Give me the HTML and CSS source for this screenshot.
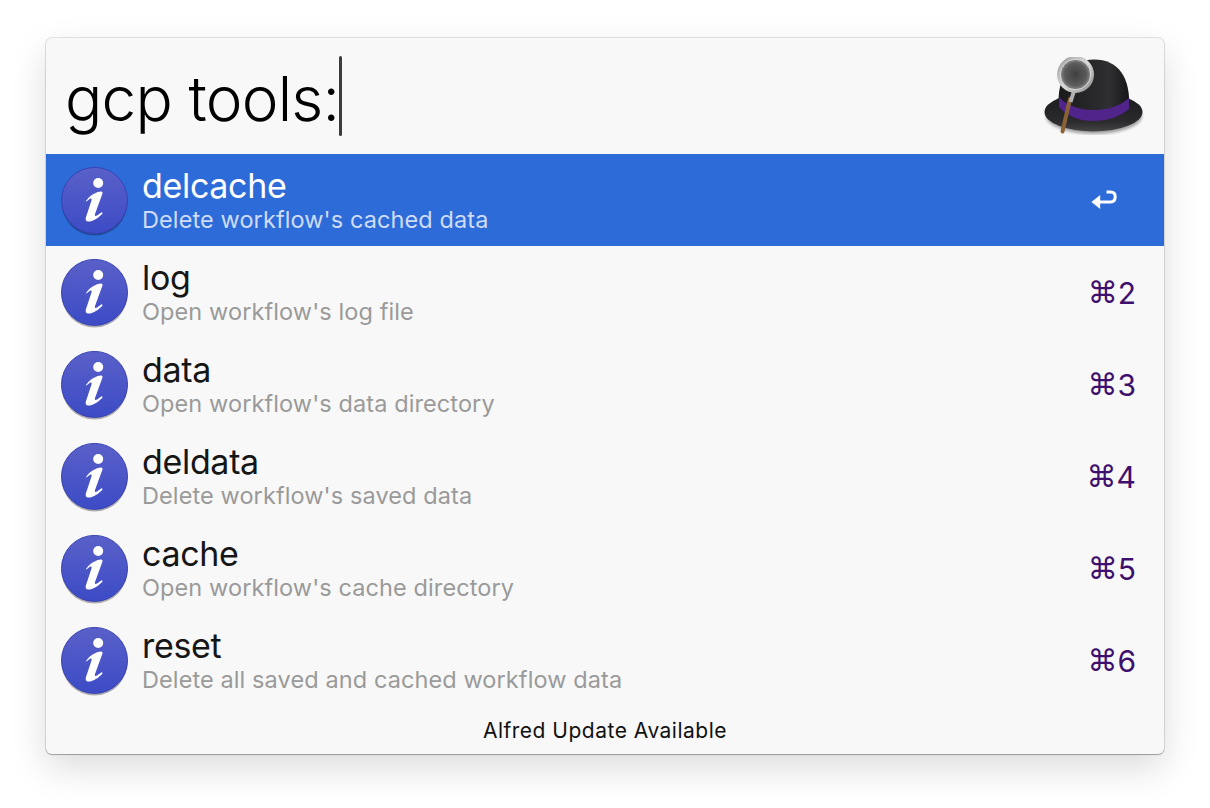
FILE: index.html
```html
<!DOCTYPE html>
<html lang="en">
<head>
<meta charset="utf-8">
<title>Alfred</title>
<link rel="stylesheet" href="styles.css">
</head>
<body>
<svg class="defs" width="0" height="0" aria-hidden="true">
  <defs>
    <linearGradient id="disc" x1="0" y1="0" x2="0" y2="1">
      <stop offset="0" stop-color="#5a60c8"/>
      <stop offset="1" stop-color="#3c4bc6"/>
    </linearGradient>
    <symbol id="info" viewBox="0 0 68 70">
      <ellipse cx="33.5" cy="36.4" rx="33" ry="33.2" fill="#000" opacity=".3"/>
      <circle cx="33.5" cy="34.4" r="33" fill="url(#disc)" stroke="#3a42b4" stroke-width="1"/>
      <circle cx="37.2" cy="17" r="5" fill="#fff"/>
      <path d="M25 35 C29 29 35 26 40 25.5 C41.5 25.4 41.8 26.5 41.3 28 L34 48 C33.4 50 34.5 50.5 36 49.5 L41 46 L41.5 47.5 C38 51.5 33 55 28.5 55.5 C25 56 24 54 25 51 L30.5 34.5 C31 32.5 30 32 28.5 33 L25.5 35.5 Z" fill="#fff"/>
    </symbol>
    <linearGradient id="crown" x1="0" y1="0" x2="1" y2="0">
      <stop offset="0" stop-color="#1a191b"/>
      <stop offset=".72" stop-color="#2f2e30"/>
      <stop offset="1" stop-color="#161517"/>
    </linearGradient>
    <linearGradient id="brim" x1="0" y1="0" x2="0" y2="1">
      <stop offset="0" stop-color="#19181a"/>
      <stop offset=".75" stop-color="#2b2a2c"/>
      <stop offset="1" stop-color="#454446"/>
    </linearGradient>
    <radialGradient id="lens" cx=".5" cy=".5" r=".55">
      <stop offset="0" stop-color="#3f3f40"/>
      <stop offset=".6" stop-color="#5c5c5d"/>
      <stop offset="1" stop-color="#b5b5b5"/>
    </radialGradient>
    <linearGradient id="ring" x1="0" y1="0" x2="1" y2="1">
      <stop offset="0" stop-color="#9b9b9b"/>
      <stop offset=".5" stop-color="#dcdcdc"/>
      <stop offset="1" stop-color="#8a8a8a"/>
    </linearGradient>
    <filter id="soft" x="-10%" y="-30%" width="120%" height="160%"><feGaussianBlur stdDeviation="1.6"/></filter>
  </defs>
</svg>
<main class="window">
  <header class="search">
    <div class="query"><span>gcp tools:</span><i class="caret"></i></div>
    <svg class="logo" viewBox="0 0 100 78" aria-hidden="true">
      <ellipse cx="50" cy="59" rx="48" ry="18" fill="#000" opacity=".35" filter="url(#soft)"/>
      <ellipse cx="49.5" cy="55" rx="49" ry="19.5" fill="url(#brim)"/>
      <path d="M15 50 C12 22 26 2.5 50 2.5 C74 2.5 87 20 85 52 C75 62 62 64 49 64 C36 64 24 60 15 50 Z" fill="url(#crown)"/>
      <path d="M15 40 C24 50 38 53 50 53 C64 53 76 49 85 41 L85 52 C76 60 63 64 49 64 C36 64 24 60 15 50 Z" fill="#50248a"/>
      <path d="M26 42 L18.5 74.5" stroke="#8a6236" stroke-width="4" stroke-linecap="round"/>
      <path d="M30 34 L26.5 45" stroke="#b0b0b0" stroke-width="4"/>
      <circle cx="31.5" cy="17.5" r="17" fill="url(#lens)" stroke="url(#ring)" stroke-width="3"/>
      <circle cx="31.5" cy="17.5" r="15.2" fill="none" stroke="#fff" stroke-opacity=".7" stroke-width="1"/>
    </svg>
  </header>
  <ul class="results">
    <li class="row selected">
      <svg class="icon" aria-hidden="true"><use href="#info"/></svg>
      <div class="text"><div class="title">delcache</div><div class="sub">Delete workflow's cached data</div></div>
      <svg class="enter" viewBox="0 0 26 22" aria-hidden="true"><path d="M15.5 2 H19.5 C22.5 2 24.2 4 24.2 6.8 C24.2 10 22.5 12 19.5 12 H5" fill="none" stroke="#fff" stroke-width="3"/><path d="M0.4 12 L9.2 5 V19 Z" fill="#fff"/></svg>
    </li>
    <li class="row">
      <svg class="icon" aria-hidden="true"><use href="#info"/></svg>
      <div class="text"><div class="title">log</div><div class="sub">Open workflow's log file</div></div>
      <div class="key"><span class="cmd">⌘</span>2</div>
    </li>
    <li class="row">
      <svg class="icon" aria-hidden="true"><use href="#info"/></svg>
      <div class="text"><div class="title">data</div><div class="sub">Open workflow's data directory</div></div>
      <div class="key"><span class="cmd">⌘</span>3</div>
    </li>
    <li class="row">
      <svg class="icon" aria-hidden="true"><use href="#info"/></svg>
      <div class="text"><div class="title">deldata</div><div class="sub">Delete workflow's saved data</div></div>
      <div class="key"><span class="cmd">⌘</span>4</div>
    </li>
    <li class="row">
      <svg class="icon" aria-hidden="true"><use href="#info"/></svg>
      <div class="text"><div class="title">cache</div><div class="sub">Open workflow's cache directory</div></div>
      <div class="key"><span class="cmd">⌘</span>5</div>
    </li>
    <li class="row">
      <svg class="icon" aria-hidden="true"><use href="#info"/></svg>
      <div class="text"><div class="title">reset</div><div class="sub">Delete all saved and cached workflow data</div></div>
      <div class="key"><span class="cmd">⌘</span>6</div>
    </li>
  </ul>
  <footer class="update">Alfred Update Available</footer>
</main>
</body>
</html>
```
FILE: styles.css
```css
* { box-sizing: border-box; }
html, body { margin: 0; height: 100%; }
body {
  background: #fff;
  padding: 38px 46px 0;
  font-family: Inter, "Liberation Sans", sans-serif;
  overflow: hidden;
}
.defs { display: block; height: 0; }
.window {
  width: 1118px;
  height: 716px;
  background: #f8f8f8;
  border-radius: 6px;
  box-shadow: 0 0 0 1px rgba(0,0,0,.1), 0 1px 1px rgba(0,0,0,.25), 0 14px 36px rgba(0,0,0,.14);
  display: flex;
  flex-direction: column;
}
.search {
  height: 116px;
  display: flex;
  align-items: center;
  justify-content: space-between;
  padding: 0 20px 0 19px;
}
.query {
  display: flex;
  align-items: center;
  font-size: 62px;
  font-weight: 300;
  letter-spacing: -.8px;
  line-height: 80px;
  color: #000;
}
.query span { padding-top: 6px; }
.caret {
  display: block;
  width: 3px;
  height: 80px;
  background: #3c3c3c;
  border-radius: 2px;
}
.logo { width: 100px; height: 78px; }
.results { list-style: none; margin: 0; padding: 0; }
.row {
  height: 92px;
  display: flex;
  align-items: center;
  padding: 2px 28px 0 15px;
}
.row.selected { background: #2d6bd9; color: #fff; }
.icon { width: 68px; height: 70px; flex: none; }
.text { flex: 1; margin-left: 13px; min-width: 0; }
.title {
  font-size: 34px;
  line-height: 37px;
  color: #161616;
  letter-spacing: -.33px;
}
.sub {
  font-size: 23.5px;
  line-height: 32px;
  color: #9a9a9a;
  letter-spacing: .1px;
}
.selected .title { color: #fff; }
.selected .sub { color: #cfdcf5; }
.key {
  font-size: 30px;
  color: #3f0f6e;
  display: flex;
  align-items: center;
  margin-top: -1px;
}
.cmd { font-family: "DejaVu Sans", sans-serif; font-size: 30px; }
.enter { width: 26px; height: 22px; margin-right: 19px; }
.update {
  flex: 1;
  display: flex;
  align-items: center;
  justify-content: center;
  font-size: 21px;
  letter-spacing: .5px;
  color: #111;
}
```
